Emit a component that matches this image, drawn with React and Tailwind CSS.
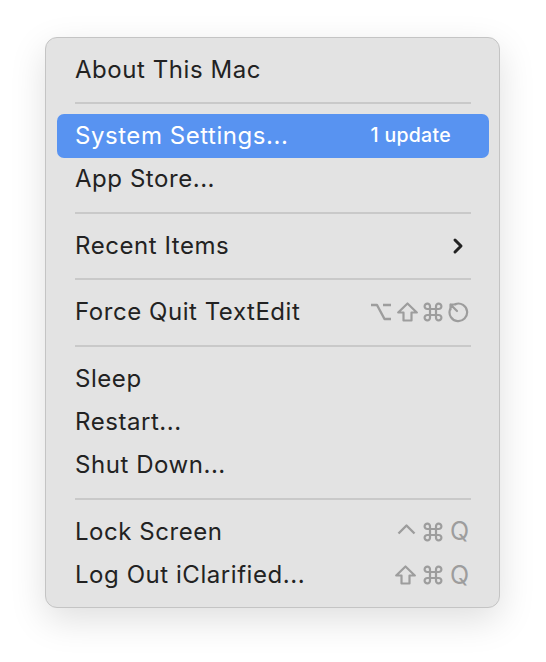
import React from 'react';
import { ChevronRight } from 'lucide-react';

const GRAY = '#9d9d9d';

// little glyphs for the keyboard shortcuts
const Option = () => (
  <svg width="22" height="20" viewBox="0 0 22 20" fill="none" stroke={GRAY} strokeWidth="2.4" strokeLinejoin="round">
    <path d="M1 3H7L14.5 17H21M13 3H21" />
  </svg>
);

const Shift = () => (
  <svg width="21" height="20" viewBox="0 0 21 20" fill="none" stroke={GRAY} strokeWidth="2.2" strokeLinejoin="round">
    <path d="M10.5 1.5L19.8 10.5H14.5V18.5H6.5V10.5H1.2Z" />
  </svg>
);

const Cmd = () => (
  <svg width="20" height="20" viewBox="0 0 20 20" fill="none" stroke={GRAY} strokeWidth="2.2">
    <path d="M7 7V4.5a2.7 2.7 0 1 0-2.7 2.5H15.7a2.7 2.7 0 1 0-2.7-2.5V15.5a2.7 2.7 0 1 0 2.7-2.5H4.3a2.7 2.7 0 1 0 2.7 2.5Z" />
  </svg>
);

const Ctrl = () => (
  <svg width="19" height="20" viewBox="0 0 19 20" fill="none" stroke={GRAY} strokeWidth="2.4" strokeLinejoin="round">
    <path d="M1.5 11.5L9.5 3.5L17.5 11.5" />
  </svg>
);

const Esc = () => (
  <svg width="21" height="21" viewBox="0 0 21 21" fill="none" stroke={GRAY} strokeWidth="2.2" strokeLinecap="round" strokeLinejoin="round">
    <path d="M7.5 2A8.8 8.8 0 1 1 2 7.5" />
    <path d="M2.5 2.5L9 9M2.5 2.5V7.5M2.5 2.5H7.5" />
  </svg>
);

const Q = () => (
  <span className="text-[25px] leading-none" style={{ color: GRAY }}>Q</span>
);

const Row = ({ label, active, right }) => (
  <div
    className={`flex items-center justify-between h-[43.3px] ml-[11px] mr-[10px] pl-[18px] pr-[22px] rounded-[7px] ${
      active ? 'bg-[#5893f1] text-white' : 'text-[#222222]'
    }`}
  >
    <span className="text-[24px] leading-none tracking-[0.55px]">{label}</span>
    {right}
  </div>
);

const Sep = () => (
  <div className="flex items-center h-[23.2px] ml-[29px] mr-[28px]">
    <div className="h-[2px] w-full bg-[#c9c9c9]" />
  </div>
);

export default function App() {
  return (
    <div className="w-[546px] h-[662px] bg-white pt-[37px] pl-[45px]" style={{ fontFamily: 'Inter, "Noto Sans", sans-serif' }}>
      <div className="w-[455px] h-[571px] rounded-[12px] bg-[#e3e3e3] border border-[#c4c4c4] pt-[10px] shadow-[0_12px_36px_rgba(0,0,0,0.13)]">
        <Row label="About This Mac" />
        <Sep />
        <Row
          label="System Settings..."
          active
          right={<span className="text-[19.5px] font-medium leading-none tracking-[0.3px] mr-[16px]">1 update</span>}
        />
        <Row label="App Store..." />
        <Sep />
        <Row label="Recent Items" right={<ChevronRight size={24} strokeWidth={3} color="#222" className="-mr-[3px]" />} />
        <Sep />
        <Row
          label="Force Quit TextEdit"
          right={
            <div className="flex items-center gap-[5px] mr-[-2px]">
              <Option />
              <Shift />
              <Cmd />
              <Esc />
            </div>
          }
        />
        <Sep />
        <Row label="Sleep" />
        <Row label="Restart..." />
        <Row label="Shut Down..." />
        <Sep />
        <Row
          label="Lock Screen"
          right={
            <div className="flex items-center gap-[7px] mr-[-2px]">
              <Ctrl />
              <Cmd />
              <Q />
            </div>
          }
        />
        <Row
          label="Log Out iClarified..."
          right={
            <div className="flex items-center gap-[7px] mr-[-2px]">
              <Shift />
              <Cmd />
              <Q />
            </div>
          }
        />
      </div>
    </div>
  );
}
